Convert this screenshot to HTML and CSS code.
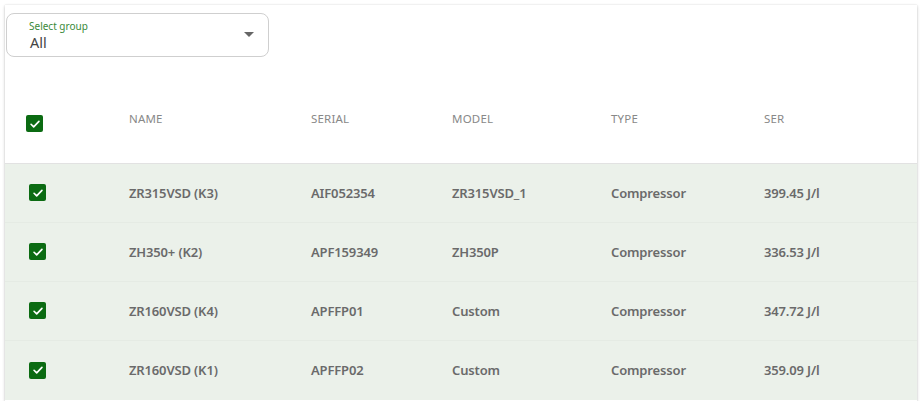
FILE: index.html
```html
<!DOCTYPE html>
<html>
<head>
<meta charset="utf-8">
<link rel="stylesheet" href="styles.css">
</head>
<body>
<div class="card">
  <div class="toolbar">
    <div class="select">
      <div class="select-text">
        <span class="select-label">Select group</span>
        <span class="select-value">All</span>
      </div>
      <span class="caret"></span>
    </div>
  </div>
  <div class="table">
    <div class="row head">
      <div class="cell cb"><span class="check hcheck"><svg viewBox="0 0 16 16"><path d="M3.5 8.3l3 3 6-6.3"/></svg></span></div>
      <div class="cell">NAME</div>
      <div class="cell">SERIAL</div>
      <div class="cell">MODEL</div>
      <div class="cell">TYPE</div>
      <div class="cell">SER</div>
    </div>
    <div class="row body">
      <div class="cell cb"><span class="check"><svg viewBox="0 0 16 16"><path d="M3.5 8.3l3 3 6-6.3"/></svg></span></div>
      <div class="cell">ZR315VSD (K3)</div>
      <div class="cell">AIF052354</div>
      <div class="cell">ZR315VSD_1</div>
      <div class="cell">Compressor</div>
      <div class="cell">399.45 J/l</div>
    </div>
    <div class="row body">
      <div class="cell cb"><span class="check"><svg viewBox="0 0 16 16"><path d="M3.5 8.3l3 3 6-6.3"/></svg></span></div>
      <div class="cell">ZH350+ (K2)</div>
      <div class="cell">APF159349</div>
      <div class="cell">ZH350P</div>
      <div class="cell">Compressor</div>
      <div class="cell">336.53 J/l</div>
    </div>
    <div class="row body">
      <div class="cell cb"><span class="check"><svg viewBox="0 0 16 16"><path d="M3.5 8.3l3 3 6-6.3"/></svg></span></div>
      <div class="cell">ZR160VSD (K4)</div>
      <div class="cell">APFFP01</div>
      <div class="cell">Custom</div>
      <div class="cell">Compressor</div>
      <div class="cell">347.72 J/l</div>
    </div>
    <div class="row body">
      <div class="cell cb"><span class="check"><svg viewBox="0 0 16 16"><path d="M3.5 8.3l3 3 6-6.3"/></svg></span></div>
      <div class="cell">ZR160VSD (K1)</div>
      <div class="cell">APFFP02</div>
      <div class="cell">Custom</div>
      <div class="cell">Compressor</div>
      <div class="cell">359.09 J/l</div>
    </div>
  </div>
</div>
</body>
</html>
```
FILE: styles.css
```css
* { box-sizing: border-box; }
html, body { margin: 0; padding: 0; background: #fff; }
body {
  font-family: "Noto Sans", "Open Sans", sans-serif;
  color: #666;
}
.card {
  margin: 5px 0 0 5px;
  width: 912px;
  height: 396px;
  background: #fff;
  box-shadow: 0 1px 3px rgba(0,0,0,0.22), 0 0 1px rgba(0,0,0,0.12);
  overflow: hidden;
}
.toolbar {
  padding: 8px 0 0 1px;
  height: 52px;
}
.select {
  width: 263px;
  height: 44px;
  border: 1px solid #cfcfcf;
  border-radius: 8px;
  display: flex;
  align-items: center;
  justify-content: space-between;
  padding: 0 14px 0 22px;
}
.select-text {
  display: flex;
  flex-direction: column;
  margin-top: 1px;
}
.select-label {
  font-size: 10px;
  line-height: 13px;
  color: #3a8a3a;
}
.select-value {
  font-size: 14.5px;
  line-height: 18px;
  color: #444;
  padding-left: 1px;
}
.caret {
  width: 0;
  height: 0;
  border-left: 5px solid transparent;
  border-right: 5px solid transparent;
  border-top: 5px solid #666;
  margin-bottom: 2px;
}
.row {
  display: grid;
  grid-template-columns: 124px 182px 141px 159px 153px 1fr;
  align-items: center;
}
.head {
  height: 107px;
  padding-top: 17px;
  border-bottom: 1px solid #e2e2e2;
  font-size: 11.5px;
  color: #888;
  letter-spacing: 0.2px;
}
.body {
  height: 59px;
  background: #ebf1ea;
  border-bottom: 1px solid #e5ebe4;
  font-size: 13px;
  font-weight: 600;
  color: #6a6a6a;
  letter-spacing: -0.15px;
  padding-bottom: 1px;
}
.body:last-child { border-bottom: none; }
.cb { padding-left: 24px; display: flex; }
.check {
  width: 17px;
  height: 17px;
  background: #0b6b12;
  border-radius: 2px;
  display: flex;
  align-items: center;
  justify-content: center;
}
.hcheck { margin-left: -3px; margin-top: 10px; }
.check svg { width: 14px; height: 14px; }
.check path {
  fill: none;
  stroke: #fff;
  stroke-width: 1.9;
  stroke-linecap: round;
  stroke-linejoin: round;
}
```
